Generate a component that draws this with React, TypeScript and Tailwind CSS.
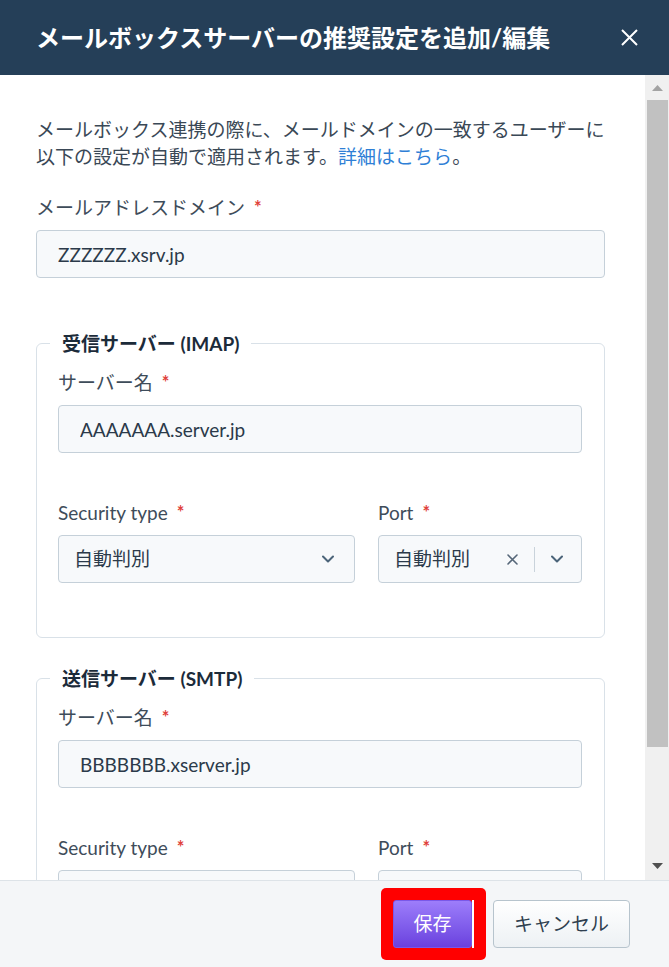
import type { ReactNode } from 'react';

const Chevron = () => (
  <svg width="12" height="8" viewBox="0 0 12 8" fill="none">
    <path d="M1 1.5l5 5 5-5" stroke="#4b6479" strokeWidth="2" strokeLinecap="round" strokeLinejoin="round" />
  </svg>
);

const Label = ({ children }: { children: ReactNode }) => (
  <div className="flex items-center h-[27px] text-[19px] leading-[27px] text-[#3e4c5a]">
    {children}
    <span className="ml-[9px] text-[18px] font-bold text-[#e0413a]">*</span>
  </div>
);

const TextField = ({ value }: { value: string }) => (
  <input
    readOnly
    value={value}
    className="mt-[9px] block w-full h-[48px] pl-[21px] bg-[#f7f9fb] border border-[#c5d0d9] rounded-[4px] text-[19px] text-[#2b3a4a] outline-none"
  />
);

const SelectBox = () => (
  <div className="mt-[9px] h-[48px] flex items-center justify-between pl-[15px] pr-[20px] bg-[#f7f9fb] border border-[#c5d0d9] rounded-[4px] text-[19px] text-[#2b3a4a]">
    <span>自動判別</span>
    <Chevron />
  </div>
);

const PortSelect = () => (
  <div className="mt-[9px] h-[48px] flex items-center pl-[15px] pr-[18px] bg-[#f7f9fb] border border-[#c5d0d9] rounded-[4px] text-[19px] text-[#2b3a4a]">
    <span>自動判別</span>
    <svg className="ml-auto" width="11" height="11" viewBox="0 0 11 11">
      <path d="M1 1l9 9M10 1l-9 9" stroke="#566779" strokeWidth="1.6" strokeLinecap="round" />
    </svg>
    <div className="ml-[16px] w-px h-[25px] bg-[#c9d3db]" />
    <div className="ml-[16px] flex">
      <Chevron />
    </div>
  </div>
);

// one server block (IMAP / SMTP)
const ServerFieldset = ({ title, server, className }: { title: string; server: string; className: string }) => (
  <fieldset className={`border border-[#d9e1e8] rounded-[6px] px-[13px] pb-[54px] ${className}`}>
    <legend className="px-[12px] text-[19px] leading-[27px] font-bold text-[#1c2b3a]">{title}</legend>
    <div className="pl-[8px] pr-[9px]">
      <div className="mt-[12px]">
        <Label>サーバー名</Label>
        <TextField value={server} />
      </div>
      <div className="mt-[46px] grid grid-cols-[1fr_204px] gap-x-[23px]">
        <div>
          <Label>Security type</Label>
          <SelectBox />
        </div>
        <div>
          <Label>Port</Label>
          <PortSelect />
        </div>
      </div>
    </div>
  </fieldset>
);

const App = () => {
  return (
    <div className="h-screen w-full flex flex-col bg-white font-[family-name:Lato,'Noto_Sans_CJK_JP',sans-serif]">
      {/* Header */}
      <div className="h-[75px] shrink-0 bg-[#253f58] flex items-center justify-between pl-[36px] pr-[31px]">
        <h1 className="text-[24px] leading-none font-bold text-white whitespace-nowrap">
          メールボックスサーバーの推奨設定を追加/編集
        </h1>
        <svg width="17" height="17" viewBox="0 0 17 17">
          <path d="M1 1l15 15M16 1L1 16" stroke="#ffffff" strokeWidth="2" />
        </svg>
      </div>

      {/* Body */}
      <div className="flex-1 flex min-h-0">
        <div className="flex-1 overflow-hidden pl-[36px] pr-[40px] pt-[41px]">
          <p className="text-[19px] leading-[27px] text-[#3a4856] whitespace-nowrap">
            メールボックス連携の際に、メールドメインの一致するユーザーに
            <br />
            以下の設定が自動で適用されます。<span className="text-[#2f7fd6]">詳細はこちら</span>。
          </p>

          <div className="mt-[24px]">
            <Label>メールアドレスドメイン</Label>
            <TextField value="ZZZZZZ.xsrv.jp" />
          </div>

          <ServerFieldset title="受信サーバー (IMAP)" server="AAAAAAA.server.jp" className="mt-[52px]" />
          <ServerFieldset title="送信サーバー (SMTP)" server="BBBBBBB.xserver.jp" className="mt-[27px]" />
        </div>

        {/* Scrollbar */}
        <div className="w-[24px] shrink-0 bg-[#f0f0f0] flex flex-col">
          <div className="h-[25px] flex items-center justify-center pt-[1px]">
            <svg width="11" height="6" viewBox="0 0 11 6">
              <path d="M0 6L5.5 0 11 6z" fill="#a3a3a3" />
            </svg>
          </div>
          <div className="ml-[2px] w-[21px] h-[647px] bg-[#c1c1c1]" />
          <div className="flex-1" />
          <div className="h-[25px] flex items-start justify-center pt-[8px]">
            <svg width="11" height="6" viewBox="0 0 11 6">
              <path d="M0 0L5.5 6 11 0z" fill="#505050" />
            </svg>
          </div>
        </div>
      </div>

      {/* Footer */}
      <div className="h-[87px] shrink-0 border-t border-[#dde3e8] bg-[#f4f6f8] flex items-center justify-end pr-[39px]">
        <div className="flex items-center bg-[#ff0000] p-[12px] rounded-[5px]">
          <button className="h-[48px] w-[79px] rounded-[3px] border border-[#7a58e8] bg-linear-to-b from-[#9d7dfb] to-[#6b40de] text-[19px] text-white">
            保存
          </button>
          <div className="w-[2px] h-[48px] bg-white" />
        </div>
        <button className="ml-[7px] h-[48px] w-[137px] rounded-[4px] border border-[#b7c4cd] bg-linear-to-b from-white to-[#edf1f4] text-[19px] text-[#2f3f4f]">
          キャンセル
        </button>
      </div>
    </div>
  );
};

export default App;
